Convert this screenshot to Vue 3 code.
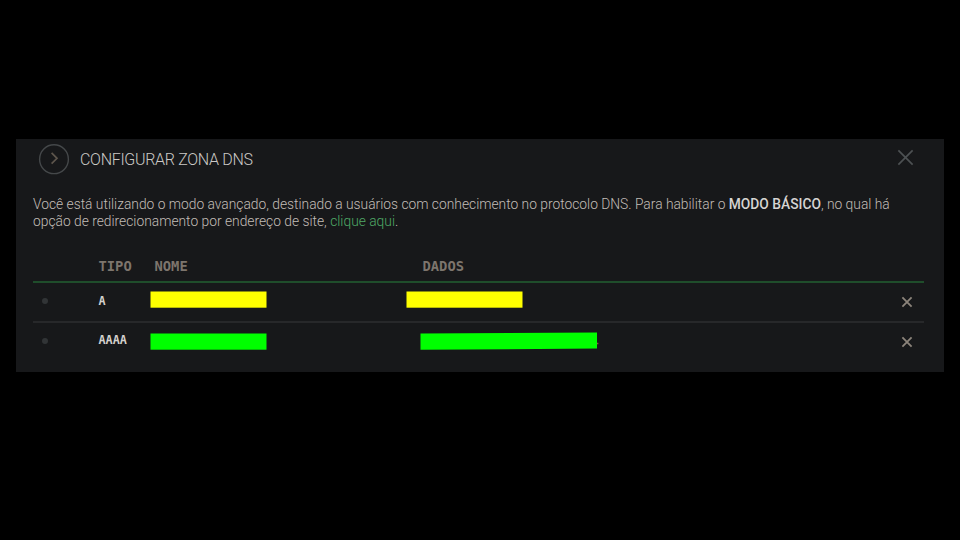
<script setup>
const records = [
  { type: 'A', tone: 'yellow' },
  { type: 'AAAA', tone: 'green' },
]
</script>

<template>
  <main class="stage">
    <section class="panel">
      <header class="head">
        <svg class="badge" viewBox="0 0 32 32">
          <circle cx="16" cy="16.2" r="14.4" fill="none" stroke="#45484a" stroke-width="1.4" />
          <path d="M13.6 9.9 L19 15.3 L13.6 20.7" fill="none" stroke="#5d554c" stroke-width="1.7" />
        </svg>
        <h1 class="title">CONFIGURAR ZONA DNS</h1>
        <svg class="close" viewBox="0 0 16 16">
          <path d="M1.3 1.3 L14.7 14.7 M14.7 1.3 L1.3 14.7" fill="none" stroke="#4d5153" stroke-width="1.6" />
        </svg>
      </header>
      <p class="intro">
        <span class="line first">Você está utilizando o modo avançado, destinado a usuários com conhecimento no protocolo DNS. Para habilitar o <b>MODO BÁSICO</b>, no qual há</span>
        <span class="line second">opção de redirecionamento por endereço de site, <a>clique aqui</a>.</span>
      </p>
      <div class="table">
        <div class="row labels">
          <span></span><span>TIPO</span><span>NOME</span><span class="data-label">DADOS</span>
        </div>
        <div v-for="r in records" :key="r.type" class="row record" :class="r.tone">
          <i class="dot"></i>
          <span class="type">{{ r.type }}</span>
          <svg class="mask name" viewBox="0 0 118 18">
            <rect x="0.5" y="0.5" width="116" height="16.2" />
          </svg>
          <svg v-if="r.tone === 'green'" class="long" viewBox="0 0 180 20">
            <path d="M1.5 2.6 L178 1.4 V17.6 L1.5 18.7 Z" fill="#00ff00" />
            <path d="M178 12.5 h1.4" stroke="#8a5b38" stroke-width="1.3" />
          </svg>
          <svg v-else class="mask data" viewBox="0 0 118 18">
            <rect x="0.5" y="0.5" width="116" height="16.2" />
          </svg>
          <svg class="remove" viewBox="0 0 12 12">
            <path d="M1.4 1.4 L10.6 10.6 M10.6 1.4 L1.4 10.6" fill="none" stroke="#8c847b" stroke-width="1.8" />
          </svg>
        </div>
      </div>
    </section>
  </main>
</template>

<style>
body { background: #000; }
</style>

<style scoped>
.stage {
  box-sizing: border-box;
  width: 960px;
  height: 540px;
  padding: 139px 16px 0;
  background: #000;
  overflow: hidden;
}
.panel {
  box-sizing: border-box;
  height: 232.6px;
  padding: 0 20px 0 17px;
  background: #17181a;
  font-family: Roboto, sans-serif;
}
.head {
  display: flex;
  align-items: center;
  height: 40px;
  padding: 0 10px 0 5px;
}
.badge { width: 32px; height: 32px; }
.title {
  margin: 1px auto 0 10px;
  font-size: 16px;
  font-weight: 300;
  letter-spacing: -0.3px;
  line-height: 20px;
  color: #cbc9c6;
  white-space: nowrap;
}
.close { width: 17px; height: 17px; margin-bottom: 3px; }
.intro {
  margin: 17px 0 0;
  font-size: 13.8px;
  font-weight: 300;
  line-height: 17px;
  color: #c2bdb7;
}
.line { display: block; white-space: nowrap; }
.intro b { font-weight: 500; color: #d6d4d2; }
.intro a { color: #4fa866; }
.table {
  margin-top: 22px;
  font-family: "DejaVu Sans Mono", monospace;
  font-weight: 700;
}
.row {
  box-sizing: border-box;
  display: grid;
  grid-template-columns: 65.5px 56px 268px 1fr 12px;
  align-items: center;
  height: 40px;
}
.labels {
  height: 31px;
  border-bottom: 2px solid #1f4d2b;
  font-size: 13.8px;
  line-height: 16px;
  color: #7d756d;
  align-items: start;
  padding-top: 6px;
}
.record { padding-right: 11.5px; }
.yellow {
  padding-bottom: 2px;
  border-bottom: 2px solid #27282a;
}
.green { height: 36px; }
.dot {
  width: 6px;
  height: 6px;
  margin-left: 9px;
  border-radius: 50%;
  background: #313436;
}
.type { font-size: 11.8px; line-height: 16px; margin-bottom: 1px; color: #d3d0cc; }
.green .type { margin-bottom: 3px; }
.mask { display: block; width: 118px; height: 18px; }
.yellow .mask { fill: #ff0; margin-bottom: 2px; }
.green .mask { fill: #0f0; margin-top: 2px; }
.name { margin-left: -5px; }
.data { margin-left: -17px; }
.long { width: 180px; height: 20px; margin-left: -4px; }
.remove { width: 12px; height: 12px; margin-top: 2px; }
</style>
